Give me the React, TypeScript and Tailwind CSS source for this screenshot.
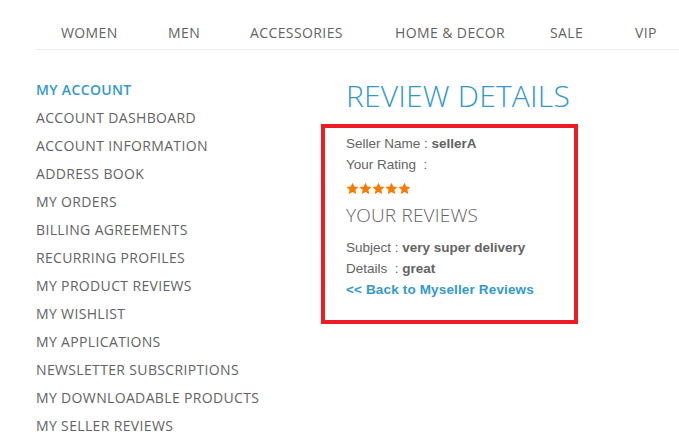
import React from "react";

const nav = [
  { t: "WOMEN", w: "w-[107px]" },
  { t: "MEN", w: "w-[82px]" },
  { t: "ACCESSORIES", w: "w-[145px]" },
  { t: "HOME & DECOR", w: "w-[155px]" },
  { t: "SALE", w: "w-[85px]" },
  { t: "VIP", w: "w-[40px]" },
];

const side = [
  "ACCOUNT DASHBOARD",
  "ACCOUNT INFORMATION",
  "ADDRESS BOOK",
  "MY ORDERS",
  "BILLING AGREEMENTS",
  "RECURRING PROFILES",
  "MY PRODUCT REVIEWS",
  "MY WISHLIST",
  "MY APPLICATIONS",
  "NEWSLETTER SUBSCRIPTIONS",
  "MY DOWNLOADABLE PRODUCTS",
  "MY SELLER REVIEWS",
];

function Star() {
  return (
    <svg width="13" height="13" viewBox="0 0 24 24" className="shrink-0">
      <path
        fill="#f77b00"
        d="M12 1.2l3.3 7.2 7.9.8-5.9 5.3 1.7 7.8L12 18.3l-7 4 1.7-7.8L.8 9.2l7.9-.8z"
      />
    </svg>
  );
}

export default function App() {
  return (
    <div className="w-[679px] h-[441px] overflow-hidden bg-white text-[#636363]" style={{ fontFamily: '"Open Sans", sans-serif' }}>
      <div className="ml-[36px] h-[50px] border-b border-[#ececec] flex items-center pt-[17px] pb-[1px] pl-[25px] text-[14px] tracking-[0.4px]">
        {nav.map((n) => (
          <div key={n.t} className={`${n.w} shrink-0 whitespace-nowrap leading-[32px]`}>{n.t}</div>
        ))}
      </div>
      <div className="flex pl-[36px] pt-[25px]">
        <div className="w-[285px] shrink-0 text-[14px] tracking-[0.35px] pt-[1px]">
          <div className="h-[28px] leading-[28px] text-[#3399cc] font-semibold">MY ACCOUNT</div>
          {side.map((s) => (
            <div key={s} className="h-[28px] leading-[28px] whitespace-nowrap">{s}</div>
          ))}
        </div>
        <div className="flex flex-col pt-[5px]">
          <div className="text-[30px] leading-[32px] text-[#3399cc] font-light ml-[25px] whitespace-nowrap tracking-[0.2px]">REVIEW DETAILS</div>
          <div className="mt-[12px] w-[257px] h-[200px] border-[4px] border-[#ed1c24] pl-[21px] pt-[5px]" style={{ fontFamily: '"Liberation Sans", Arial, sans-serif' }}>
            <div className="text-[13.5px] leading-[21px]">Seller Name : <span className="font-bold">sellerA</span></div>
            <div className="text-[13.5px] leading-[21px]">Your Rating &nbsp;:</div>
            <div className="mt-[1px] h-[24px] flex items-center">
              <Star /><Star /><Star /><Star /><Star />
            </div>
            <div className="mt-[1px] text-[19px] leading-[28px] font-light tracking-[0.2px]" style={{ fontFamily: '"Open Sans", sans-serif' }}>YOUR REVIEWS</div>
            <div className="mt-[8px] text-[13.5px] leading-[21px]">Subject : <span className="font-bold">very super delivery</span></div>
            <div className="text-[13.5px] leading-[21px]">Details &nbsp;: <span className="font-bold">great</span></div>
            <div className="text-[13.5px] leading-[21px] font-bold text-[#3399cc] tracking-[0.15px]">&lt;&lt; Back to Myseller Reviews</div>
          </div>
        </div>
      </div>
    </div>
  );
}
